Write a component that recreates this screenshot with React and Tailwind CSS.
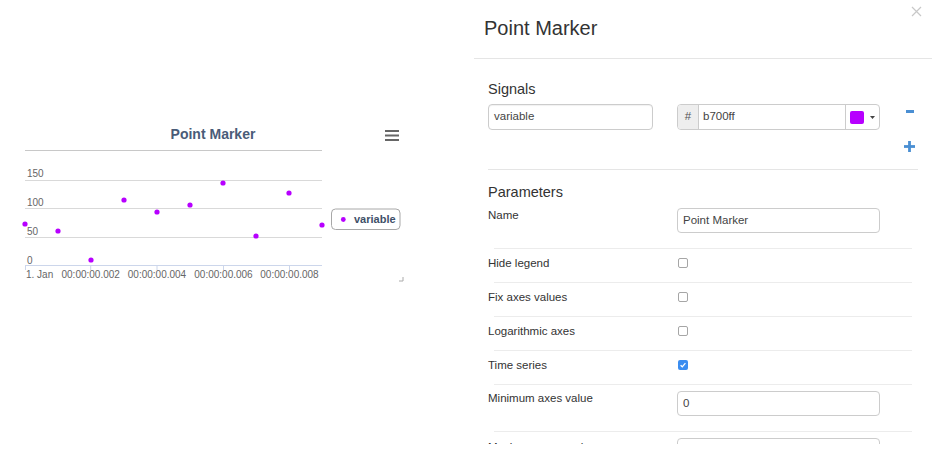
const points = [
  [25, 224],
  [58, 231],
  [91, 260],
  [124, 200],
  [157, 212],
  [190, 205],
  [223, 183],
  [256, 236],
  [289, 193],
  [322, 225],
];

const xLabels = [
  { x: 90.7, text: "00:00:00.002" },
  { x: 157, text: "00:00:00.004" },
  { x: 223.5, text: "00:00:00.006" },
  { x: 289.5, text: "00:00:00.008" },
];

const yLabels = [
  { y: 174.5, text: "150" },
  { y: 203.5, text: "100" },
  { y: 232.5, text: "50" },
  { y: 261, text: "0" },
];

const checkRows = [
  { label: "Hide legend", checked: false },
  { label: "Fix axes values", checked: false },
  { label: "Logarithmic axes", checked: false },
  { label: "Time series", checked: true },
];

const Chart = () => {
  return (
    <svg width="410" height="180" viewBox="0 110 410 180" className="block">
      {/* title + menu */}
      <text x="213" y="139" textAnchor="middle" fontSize="14" fontWeight="700" fill="#4a5c78">
        Point Marker
      </text>
      <rect x="385" y="130" width="14" height="2" fill="#666" />
      <rect x="385" y="134.5" width="14" height="2" fill="#666" />
      <rect x="385" y="139" width="14" height="2" fill="#666" />

      {/* grid */}
      <line x1="25" y1="150.5" x2="322" y2="150.5" stroke="#c8c8c8" />
      <line x1="25" y1="180.5" x2="322" y2="180.5" stroke="#d9d9d9" />
      <line x1="25" y1="208.5" x2="322" y2="208.5" stroke="#d9d9d9" />
      <line x1="25" y1="237.5" x2="322" y2="237.5" stroke="#d9d9d9" />
      <line x1="25" y1="265.5" x2="322" y2="265.5" stroke="#ccd6eb" />
      {[25.5, 90.7, 157, 223.5, 289.5].map((x) => (
        <line key={x} x1={x} y1="265.5" x2={x} y2="270" stroke="#ccd6eb" />
      ))}

      {yLabels.map((l) => (
        <text key={l.text} x="27" y={l.y} dominantBaseline="middle" fontSize="10" fill="#666">
          {l.text}
        </text>
      ))}
      <text x="26" y="275" dominantBaseline="middle" fontSize="10" fill="#666">
        1. Jan
      </text>
      {xLabels.map((l) => (
        <text key={l.text} x={l.x} y="275" textAnchor="middle" dominantBaseline="middle" fontSize="10" fill="#666">
          {l.text}
        </text>
      ))}

      {points.map(([x, y]) => (
        <circle key={x} cx={x} cy={y} r="2.6" fill="#b700ff" />
      ))}

      {/* legend */}
      <rect x="331.5" y="209" width="68.5" height="20.5" rx="4" fill="#fff" stroke="#a8a8a8" />
      <circle cx="343.3" cy="219.5" r="2.4" fill="#b700ff" />
      <text x="354" y="220" dominantBaseline="middle" fontSize="11" fontWeight="700" fill="#3e5068">
        variable
      </text>

      {/* resize handle */}
      <path d="M403 277 V281 H399" fill="none" stroke="#aaa" strokeWidth="1" />
    </svg>
  );
};

const Checkbox = ({ checked }) =>
  checked ? (
    <span className="flex h-[10px] w-[10px] items-center justify-center rounded-[2px] bg-[#3b8df0]">
      <svg width="8" height="8" viewBox="0 0 8 8">
        <path d="M1.6 4.2 L3.3 5.8 L6.4 2.2" fill="none" stroke="#fff" strokeWidth="1.3" />
      </svg>
    </span>
  ) : (
    <span className="h-[10px] w-[10px] rounded-[2px] border border-[#a6a6a6] bg-white" />
  );

const Separator = () => <div className="ml-[6px] h-px w-[418px] bg-[#ececec]" />;

const App = () => {
  return (
    <div className="flex h-[454px] w-[949px] overflow-hidden bg-white font-['Liberation_Sans',Arial,sans-serif] text-[#333]">
      {/* chart column */}
      <div className="w-[474px] shrink-0 pt-[110px]">
        <Chart />
      </div>

      {/* settings modal, scrolled content clipped */}
      <div className="relative h-[444px] w-[458px] shrink-0 overflow-hidden">
        <div className="flex h-[59px] items-center border-b border-[#e5e5e5] pb-[2px] pl-[10px]">
          <h1 className="text-[20px] leading-[24px] text-[#333]">Point Marker</h1>
        </div>
        <svg className="absolute left-[437px] top-[6px]" width="11" height="11" viewBox="0 0 11 11">
          <path d="M1 1 L10 10 M10 1 L1 10" stroke="#c8c8c8" strokeWidth="1.2" />
        </svg>

        <div className="pl-[14px]">
          {/* signals */}
          <div className="pt-[20px]">
            <h2 className="text-[14.5px] leading-[20px]">Signals</h2>
            <div className="mt-[5px] flex h-[46px] items-start">
              <div className="flex h-[26px] w-[165px] items-center rounded-[4px] border border-[#ccc] px-[5px] text-[11.5px] text-[#444] shadow-[inset_0_1px_1px_rgba(0,0,0,0.06)]">
                variable
              </div>
              <div className="ml-[24px] flex h-[26px] w-[203px] overflow-hidden rounded-[4px] border border-[#ccc] text-[11.5px] text-[#444]">
                <div className="flex w-[21px] items-center justify-center border-r border-[#ccc] bg-[#eee] text-[#555]">
                  #
                </div>
                <div className="flex flex-1 items-center px-[4px]">b700ff</div>
                <div className="flex w-[34px] items-center border-l border-[#ccc] pl-[4px]">
                  <span className="h-[13px] w-[14px] rounded-[2px] bg-[#b700ff]" />
                  <svg className="ml-[6px]" width="5" height="3" viewBox="0 0 5 3">
                    <path d="M0 0 H5 L2.5 3 Z" fill="#444" />
                  </svg>
                </div>
              </div>
              <div className="ml-[24px] flex w-[11px] flex-col items-center">
                <span className="mt-[6px] h-[2.5px] w-[8px] bg-[#4a8fd3]" />
                <svg className="mt-[28px]" width="11" height="11" viewBox="0 0 11 11">
                  <rect x="4.1" y="0" width="2.8" height="11" fill="#4a8fd3" />
                  <rect x="0" y="4.1" width="11" height="2.8" fill="#4a8fd3" />
                </svg>
              </div>
            </div>
            <div className="mt-[19px] h-px w-[430px] bg-[#e5e5e5]" />
          </div>

          {/* parameters */}
          <div className="pt-[12px]">
            <h2 className="text-[14.5px] leading-[20px]">Parameters</h2>

            <div className="flex pb-[15px] pt-[6px] text-[11.5px]">
              <div className="-mt-px w-[189px] leading-[16px]">Name</div>
              <div className="flex h-[25px] w-[203px] items-center rounded-[4px] border border-[#ccc] px-[5px] text-[#444]">
                Point Marker
              </div>
            </div>
            <Separator />

            {checkRows.map((row) => (
              <div key={row.label}>
                <div className="flex pb-[11px] pt-[6px] text-[11.5px] leading-[16px]">
                  <div className="w-[189px]">{row.label}</div>
                  <div className="flex h-[16px] items-center pl-px">
                    <Checkbox checked={row.checked} />
                  </div>
                </div>
                <Separator />
              </div>
            ))}

            <div className="flex pb-[15px] pt-[6px] text-[11.5px]">
              <div className="-mt-px w-[189px] leading-[16px]">Minimum axes value</div>
              <div className="flex h-[25px] w-[203px] items-center rounded-[4px] border border-[#ccc] px-[5px] text-[#444]">
                0
              </div>
            </div>
            <Separator />

            <div className="flex pb-[15px] pt-[6px] text-[11.5px]">
              <div className="mt-[1px] w-[189px] leading-[16px]">Maximum axes value</div>
              <div className="flex h-[25px] w-[203px] items-center rounded-[4px] border border-[#ccc] px-[5px] text-[#444]" />
            </div>
          </div>
        </div>
      </div>
    </div>
  );
};

export default App;
